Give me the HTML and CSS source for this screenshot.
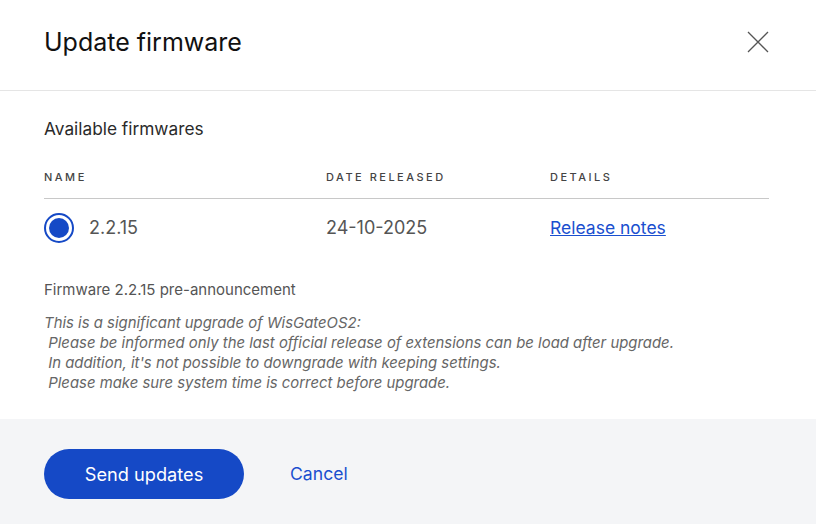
FILE: index.html
```html
<!DOCTYPE html>
<html lang="en">
<head>
  <meta charset="UTF-8">
  <title>Update firmware</title>
  <link rel="stylesheet" href="styles.css">
</head>
<body>
  <div class="modal">
    <!-- Header -->
    <div class="modal-header">
      <h1>Update firmware</h1>
      <button class="close-btn" aria-label="Close">
        <svg width="22" height="22" viewBox="0 0 22 22"><path d="M1 1L21 21M21 1L1 21" stroke="#555" stroke-width="1.3" fill="none"/></svg>
      </button>
    </div>

    <!-- Body -->
    <div class="modal-body">
      <h2>Available firmwares</h2>
      <table class="fw-table">
        <thead>
          <tr>
            <th class="col-name">Name</th>
            <th class="col-date">Date released</th>
            <th>Details</th>
          </tr>
        </thead>
        <tbody>
          <tr>
            <td>
              <label class="fw-radio">
                <span class="radio-dot"></span>
                2.2.15
              </label>
            </td>
            <td>24-10-2025</td>
            <td><a href="#" class="notes-link">Release notes</a></td>
          </tr>
        </tbody>
      </table>

      <p class="announce-title">Firmware 2.2.15 pre-announcement</p>
      <p class="announce-text">This is a significant upgrade of WisGateOS2:
 Please be informed only the last official release of extensions can be load after upgrade.
 In addition, it's not possible to downgrade with keeping settings.
 Please make sure system time is correct before upgrade.</p>
    </div>

    <!-- Footer -->
    <div class="modal-footer">
      <button class="send-btn">Send updates</button>
      <a href="#" class="cancel-link">Cancel</a>
    </div>
  </div>
</body>
</html>
```

FILE: styles.css
```css
html, body {
  margin: 0;
  padding: 0;
  background: #fff;
}
body {
  font-family: Inter, "Noto Sans", sans-serif;
  color: #333;
}
.modal {
  width: 816px;
  height: 524px;
  display: flex;
  flex-direction: column;
}
.modal-header {
  height: 91px;
  display: flex;
  align-items: center;
  justify-content: space-between;
  padding: 0 47px 6px 44px;
  box-sizing: border-box;
  border-bottom: 1px solid #e5e5e5;
}
.modal-header h1 {
  margin: 0;
  font-family: Inter, sans-serif;
  font-weight: 400;
  font-size: 25px;
  color: #111;
}
.close-btn {
  background: none;
  border: 0;
  padding: 0;
  width: 22px;
  height: 22px;
  cursor: pointer;
}
.modal-body {
  flex: 1;
  padding: 28px 47px 0 44px;
}
.modal-body h2 {
  margin: 0 0 31px;
  font-size: 17.3px;
  font-weight: 400;
  color: #2a2a2a;
  line-height: 20px;
}
.fw-table {
  width: 100%;
  border-collapse: collapse;
}
.fw-table th {
  text-align: left;
  font-size: 11px;
  font-weight: 500;
  letter-spacing: 2.5px;
  text-transform: uppercase;
  color: #444;
  padding: 0 0 14px;
  border-bottom: 1px solid #c8c8c8;
}
.col-name { width: 282px; }
.col-date { width: 224px; }
.fw-table td {
  font-size: 18px;
  color: #555;
  padding: 14px 0 0;
  line-height: 30px;
}
.fw-radio {
  display: flex;
  align-items: center;
  gap: 15px;
}
.radio-dot {
  width: 30px;
  height: 30px;
  border: 2px solid #1549c6;
  border-radius: 50%;
  box-sizing: border-box;
  display: flex;
  align-items: center;
  justify-content: center;
}
.radio-dot::after {
  content: "";
  width: 20px;
  height: 20px;
  background: #1549c6;
  border-radius: 50%;
}
.notes-link {
  color: #1a4fcf;
  font-size: 17.5px;
}
.announce-title {
  margin: 37px 0 13px;
  font-size: 15px;
  color: #555;
  line-height: 20px;
}
.announce-text {
  margin: 0;
  font-size: 14.9px;
  font-style: italic;
  color: #666;
  line-height: 20px;
  white-space: pre-wrap;
}
.modal-footer {
  height: 105px;
  box-sizing: border-box;
  background: #f4f5f7;
  display: flex;
  align-items: center;
  gap: 46px;
  padding: 4px 44px 0;
}
.send-btn {
  width: 200px;
  height: 50px;
  border: 0;
  border-radius: 25px;
  background: #1549c6;
  color: #fff;
  font-family: Inter, sans-serif;
  font-size: 18.2px;
  cursor: pointer;
}
.cancel-link {
  color: #1a4fcf;
  font-size: 17.6px;
  text-decoration: none;
}
```
